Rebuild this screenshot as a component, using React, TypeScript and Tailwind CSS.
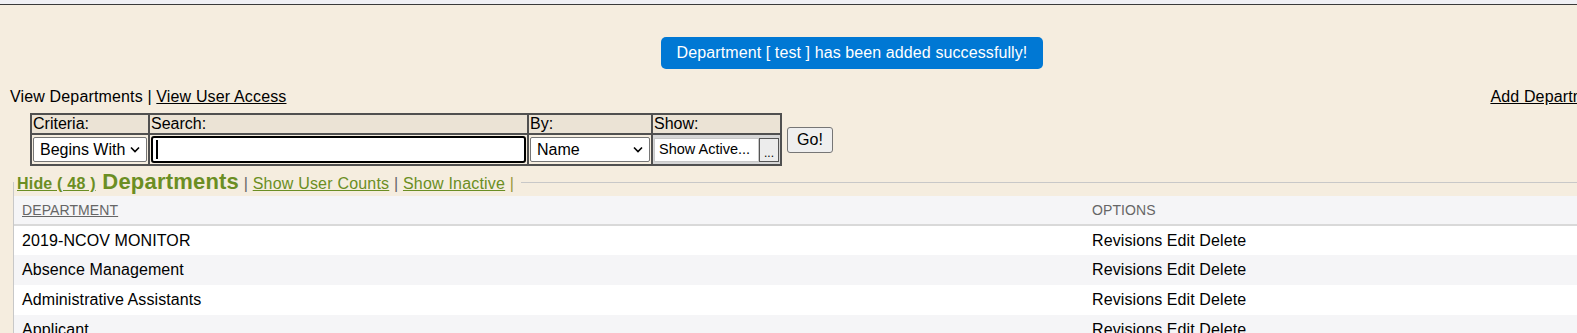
import React from "react";

const rows = [
  "2019-NCOV MONITOR",
  "Absence Management",
  "Administrative Assistants",
  "Applicant",
];

const Chevron = () => (
  <svg width="10" height="7" viewBox="0 0 10 7" className="shrink-0">
    <path d="M1 1.5l4 4 4-4" fill="none" stroke="#000" strokeWidth="1.6" />
  </svg>
);

const SelectBox = ({ value }: { value: string }) => (
  <div className="h-[25px] bg-white border border-[#767676] rounded-[2px] flex items-center justify-between pl-[6px] pr-[6px] text-[16px] leading-none">
    <span>{value}</span>
    <Chevron />
  </div>
);

export default function App() {
  return (
    <div className="w-[1577px] h-[333px] overflow-hidden bg-[#f5eddf] text-black font-['Liberation_Sans',Arial,sans-serif]">
      <div className="h-[4px] bg-[#f0f0f4]" />
      <div className="h-px bg-[#3a3a3a]" />

      <div className="w-[1704px]">
        {/* success banner */}
        <div className="flex justify-center pt-[32px]">
          <div className="h-[32px] px-[16px] flex items-center rounded-[5px] bg-[#0078d4] text-white text-[16px] tracking-[0.1px]">
            Department [ test ] has been added successfully!
          </div>
        </div>

        {/* top links */}
        <div className="flex justify-between pl-[10px] pr-[95px] mt-[19px] text-[16px] leading-[18px] tracking-[0.15px]">
          <div>
            View Departments | <a className="underline">View User Access</a>
          </div>
          <a className="underline">Add Department</a>
        </div>

        {/* search form */}
        <div className="flex items-center ml-[30px] mt-[7px] gap-[5px]">
          <table className="table-fixed w-[750px] border-collapse border-2 border-[#505050] text-[16px]">
            <colgroup>
              <col className="w-[118px]" />
              <col className="w-[379px]" />
              <col className="w-[124px]" />
              <col className="w-[129px]" />
            </colgroup>
            <tbody>
              <tr className="bg-[#ebe3d5] leading-[18px]">
                <td className="border-2 border-[#505050] px-[1px]">Criteria:</td>
                <td className="border-2 border-[#505050] px-[1px]">Search:</td>
                <td className="border-2 border-[#505050] px-[1px]">By:</td>
                <td className="border-2 border-[#505050] px-[1px]">Show:</td>
              </tr>
              <tr className="h-[30px]">
                <td className="border-2 border-[#505050] p-[1px]">
                  <SelectBox value="Begins With" />
                </td>
                <td className="border-2 border-[#505050] p-[1px]">
                  <div className="h-[27px] bg-white border-2 border-black rounded-[3px] flex items-center pl-[3px]">
                    <div className="w-[1.5px] h-[19px] bg-black" />
                  </div>
                </td>
                <td className="border-2 border-[#505050] p-[1px]">
                  <SelectBox value="Name" />
                </td>
                <td className="border-2 border-[#505050] p-[1px] bg-[#d6d6d6]">
                  <div className="flex h-[24px]">
                    <div className="flex-1 bg-white flex items-center pl-[4px] text-[14.5px] border border-[#c8c8c8]">
                      Show Active...
                    </div>
                    <button className="w-[20px] bg-[#ececec] border border-[#555] text-[12px] leading-none pb-[2px] flex items-end justify-center">
                      ...
                    </button>
                  </div>
                </td>
              </tr>
            </tbody>
          </table>
          <button className="w-[46px] h-[26px] bg-[#efefef] border border-[#767676] rounded-[3px] text-[16px] leading-none">
            Go!
          </button>
        </div>

        {/* departments list */}
        <fieldset className="ml-[13px] mt-[3px] border-0 border-l border-t border-[#c8c8c8]">
          <legend className="pl-[3px] pr-[7px] leading-[25px] text-[16px] text-[#6b8e23] tracking-[0.2px]">
            <a className="font-bold underline">Hide ( 48 )</a>{" "}
            <span className="font-bold text-[22px] ml-[2px]">Departments</span>{" "}
            <span className="text-[#666]">|</span>{" "}
            <a className="underline">Show User Counts</a>{" "}
            <span className="text-[#666]">|</span>{" "}
            <a className="underline">Show Inactive</a>{" "}
            <span className="text-[#9a9a3a]">|</span>
          </legend>

          <table className="w-full border-collapse text-[16px] tracking-[0.1px]">
            <thead>
              <tr className="h-[29px] bg-[#f5f5f7] border-b-2 border-[#d9d9d9] text-[14px] text-[#666] text-left">
                <th className="font-normal pl-[8px] w-[1070px]">
                  <span className="underline">DEPARTMENT</span>
                </th>
                <th className="font-normal pl-[8px]">OPTIONS</th>
              </tr>
            </thead>
            <tbody>
              {rows.map((name, i) => (
                <tr key={name} className={`h-[30px] ${i % 2 === 0 ? "bg-white" : "bg-[#f5f5f7]"}`}>
                  <td className="pl-[8px]">{name}</td>
                  <td className="pl-[8px]">Revisions Edit Delete</td>
                </tr>
              ))}
            </tbody>
          </table>
        </fieldset>
      </div>
    </div>
  );
}
